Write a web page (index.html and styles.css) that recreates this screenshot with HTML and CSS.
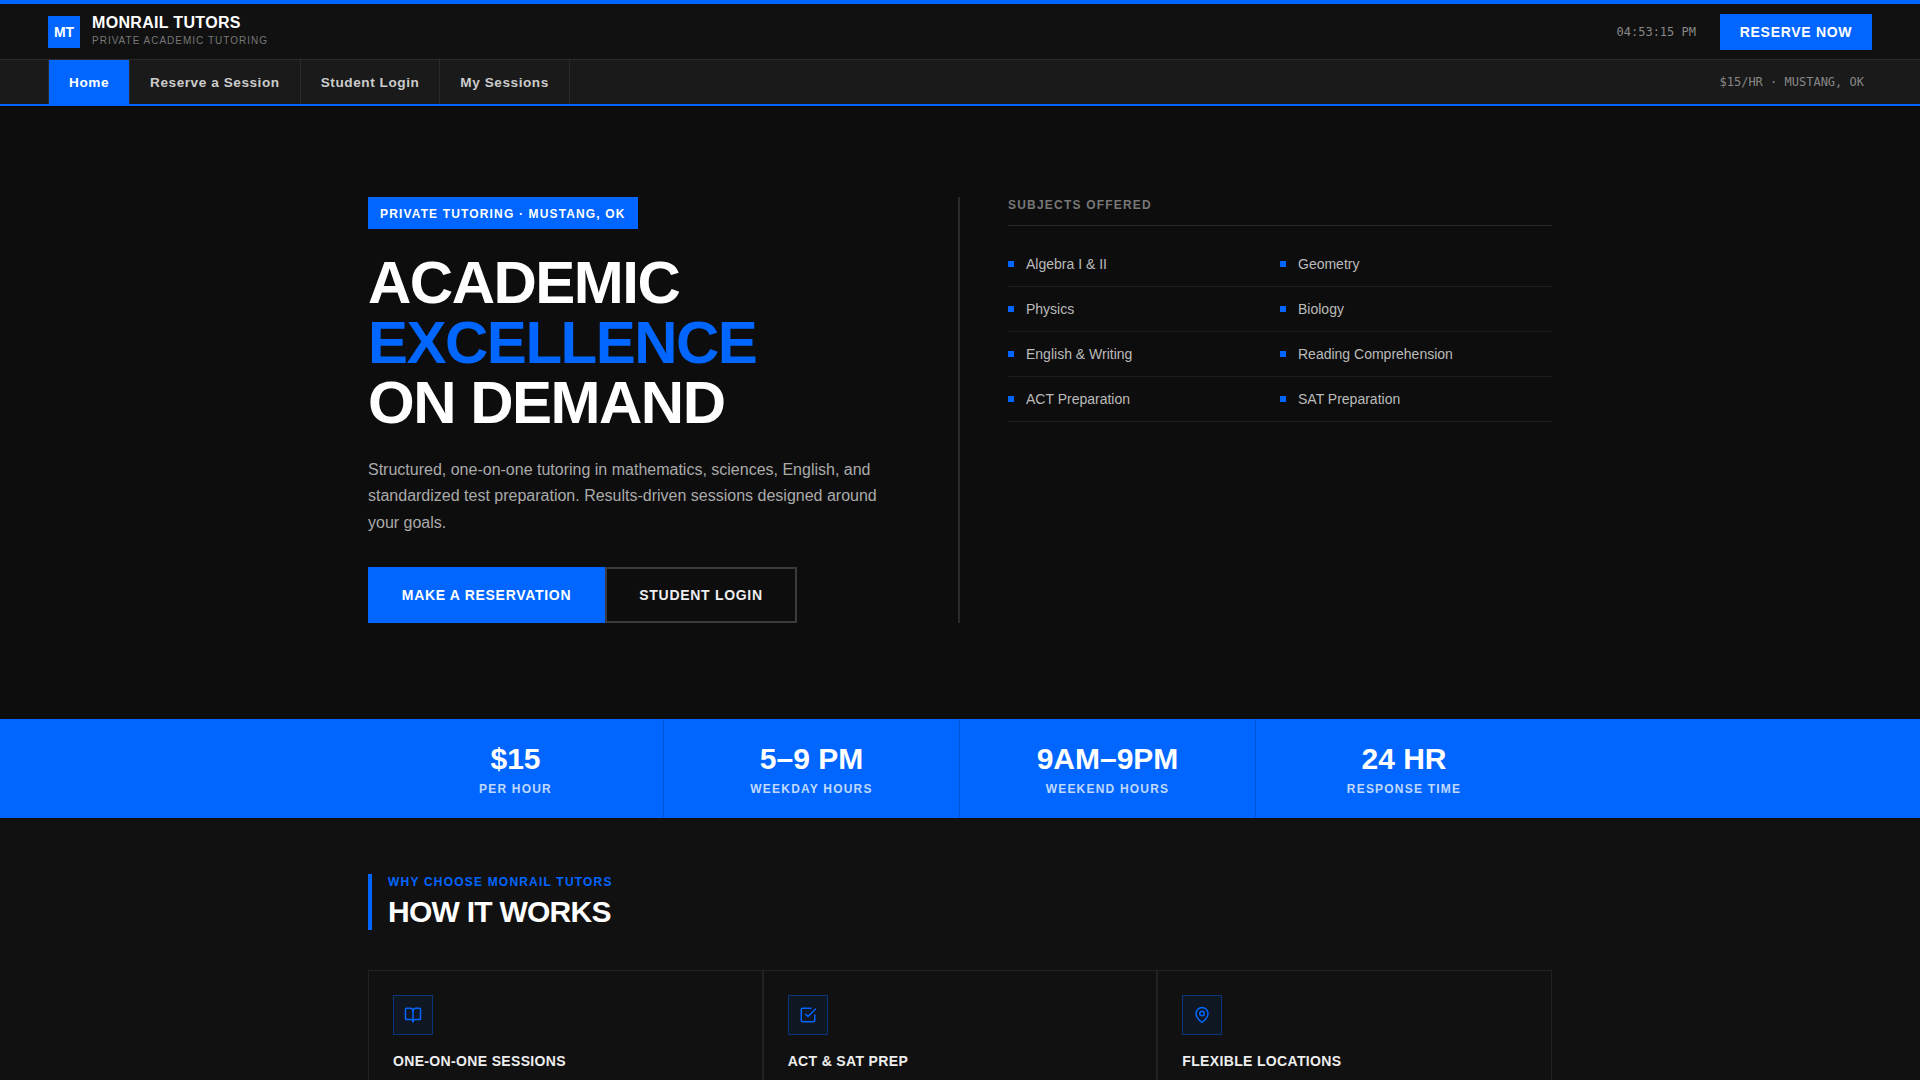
FILE: index.html
```html
<!DOCTYPE html>
<html lang="en">
<head>
<meta charset="utf-8">
<title>Monrail Tutors</title>
<link rel="stylesheet" href="styles.css">
</head>
<body>
<header class="topbar">
  <div class="brand">
    <div class="logo">MT</div>
    <div class="brand-text">
      <div class="brand-name">MONRAIL TUTORS</div>
      <div class="brand-sub">PRIVATE ACADEMIC TUTORING</div>
    </div>
  </div>
  <div class="top-right">
    <span class="clock">04:53:15 PM</span>
    <a class="reserve">RESERVE NOW</a>
  </div>
</header>
<nav class="nav">
  <ul class="nav-list">
    <li class="nav-item active">Home</li>
    <li class="nav-item">Reserve a Session</li>
    <li class="nav-item">Student Login</li>
    <li class="nav-item">My Sessions</li>
  </ul>
  <span class="nav-info">$15/HR · MUSTANG, OK</span>
</nav>
<main>
  <section class="hero">
    <div class="hero-inner">
      <div class="hero-left">
        <div class="tag">PRIVATE TUTORING · MUSTANG, OK</div>
        <h1 class="headline">ACADEMIC<br><span class="accent">EXCELLENCE</span><br>ON DEMAND</h1>
        <p class="lead">Structured, one-on-one tutoring in mathematics, sciences, English, and standardized test preparation. Results-driven sessions designed around your goals.</p>
        <div class="cta">
          <a class="btn btn-primary">MAKE A RESERVATION</a>
          <a class="btn btn-outline">STUDENT LOGIN</a>
        </div>
      </div>
      <div class="hero-right">
        <div class="subjects-title">SUBJECTS OFFERED</div>
        <ul class="subjects">
          <li>Algebra I &amp; II</li>
          <li>Geometry</li>
          <li>Physics</li>
          <li>Biology</li>
          <li>English &amp; Writing</li>
          <li>Reading Comprehension</li>
          <li>ACT Preparation</li>
          <li>SAT Preparation</li>
        </ul>
      </div>
    </div>
  </section>
  <section class="stats">
    <div class="stats-inner">
      <div class="stat"><div class="stat-num">$15</div><div class="stat-label">PER HOUR</div></div>
      <div class="stat"><div class="stat-num">5–9 PM</div><div class="stat-label">WEEKDAY HOURS</div></div>
      <div class="stat"><div class="stat-num">9AM–9PM</div><div class="stat-label">WEEKEND HOURS</div></div>
      <div class="stat"><div class="stat-num">24 HR</div><div class="stat-label">RESPONSE TIME</div></div>
    </div>
  </section>
  <section class="how">
    <div class="how-inner">
      <div class="section-head">
        <div class="eyebrow">WHY CHOOSE MONRAIL TUTORS</div>
        <h2 class="section-title">HOW IT WORKS</h2>
      </div>
      <div class="cards">
        <article class="card">
          <div class="icon-box">
            <svg class="icon" viewBox="0 0 24 24"><path d="M12 7v14"/><path d="M3 18a1 1 0 0 1-1-1V4a1 1 0 0 1 1-1h5a4 4 0 0 1 4 4 4 4 0 0 1 4-4h5a1 1 0 0 1 1 1v13a1 1 0 0 1-1 1h-6a3 3 0 0 0-3 3 3 3 0 0 0-3-3z"/></svg>
          </div>
          <h3 class="card-title">ONE-ON-ONE SESSIONS</h3>
        </article>
        <article class="card">
          <div class="icon-box">
            <svg class="icon" viewBox="0 0 24 24"><path d="m9 11 3 3L22 4"/><path d="M21 12v7a2 2 0 0 1-2 2H5a2 2 0 0 1-2-2V5a2 2 0 0 1 2-2h11"/></svg>
          </div>
          <h3 class="card-title">ACT &amp; SAT PREP</h3>
        </article>
        <article class="card">
          <div class="icon-box">
            <svg class="icon" viewBox="0 0 24 24"><path d="M20 10c0 6-8 12-8 12s-8-6-8-12a8 8 0 0 1 16 0Z"/><circle cx="12" cy="10" r="3"/></svg>
          </div>
          <h3 class="card-title">FLEXIBLE LOCATIONS</h3>
        </article>
      </div>
    </div>
  </section>
</main>
</body>
</html>
```
FILE: styles.css
```css
* { box-sizing: border-box; }
html, body { margin: 0; padding: 0; }
body {
  background: #111;
  color: #fff;
  font-family: "Liberation Sans", Arial, sans-serif;
}
a { display: block; }
ul { list-style: none; margin: 0; padding: 0; }

.topbar {
  display: flex;
  justify-content: space-between;
  align-items: center;
  height: 60px;
  padding: 10px 48px 9px;
  background: #111;
  border-top: 4px solid #0066ff;
  border-bottom: 1px solid #2a2a2a;
}
.brand { display: flex; align-items: center; gap: 12px; }
.logo {
  width: 32px;
  height: 32px;
  display: flex;
  align-items: center;
  justify-content: center;
  background: #0066ff;
  font-size: 14px;
  font-weight: 700;
}
.brand-text { padding-bottom: 2px; }
.brand-name { font-size: 16px; font-weight: 700; letter-spacing: 0.32px; line-height: 16px; }
.brand-sub { font-size: 10px; letter-spacing: 1px; color: #777; line-height: 12px; margin-top: 4.5px; }
.top-right { display: flex; align-items: center; gap: 24px; }
.clock { font-family: "DejaVu Sans Mono", monospace; font-size: 12px; color: #888; }
.reserve {
  width: 152px;
  height: 36px;
  line-height: 36px;
  text-align: center;
  background: #0066ff;
  font-size: 14px;
  font-weight: 700;
  letter-spacing: 0.7px;
}

.nav {
  display: flex;
  justify-content: space-between;
  align-items: center;
  height: 46px;
  padding: 0 56px 0 48px;
  background: #1a1a1a;
  border-bottom: 2px solid #0066ff;
}
.nav-list { display: flex; height: 44px; border-left: 1px solid #2a2a2a; }
.nav-item {
  display: flex;
  align-items: center;
  padding: 0 20px;
  font-size: 13.6px;
  font-weight: 700;
  letter-spacing: 0.56px;
  color: #ccc;
  border-right: 1px solid #2a2a2a;
}
.nav-item.active { background: #0066ff; color: #fff; }
.nav-info { font-family: "DejaVu Sans Mono", monospace; font-size: 12px; color: #888; }

.hero { background: #0d0d0d; padding: 91px 0 96px; }
.hero-inner {
  display: grid;
  grid-template-columns: 1fr 1fr;
  width: 1184px;
  margin: 0 auto;
}
.hero-left { padding-right: 48px; border-right: 2px solid #2a2a2a; }
.hero-right { padding-left: 48px; }
.tag {
  display: inline-block;
  height: 32px;
  line-height: 34px;
  padding: 0 12px;
  background: #0066ff;
  font-size: 12px;
  font-weight: 700;
  letter-spacing: 1.15px;
  vertical-align: top;
}
.headline {
  margin: 24px 0;
  font-size: 60px;
  line-height: 60px;
  font-weight: 700;
  letter-spacing: -1.5px;
}
.accent { color: #0066ff; }
.lead {
  margin: 0 0 30.8px;
  font-size: 16px;
  line-height: 26.4px;
  color: #aaa;
}
.cta { display: flex; }
.btn {
  height: 56px;
  line-height: 56px;
  font-size: 14px;
  font-weight: 700;
  letter-spacing: 0.7px;
  text-align: center;
}
.btn-primary { width: 237px; background: #0066ff; }
.btn-outline { width: 192px; line-height: 52px; border: 2px solid #3a3a3a; color: #eee; }

.subjects-title {
  font-size: 12px;
  font-weight: 700;
  letter-spacing: 1.2px;
  color: #777;
  line-height: 16px;
  padding-bottom: 12px;
  border-bottom: 1px solid #2a2a2a;
  margin-bottom: 16px;
}
.subjects { display: grid; grid-template-columns: 1fr 1fr; }
.subjects li {
  display: flex;
  align-items: center;
  gap: 12px;
  height: 45px;
  font-size: 14px;
  color: #bbb;
  border-bottom: 1px solid #1e1e1e;
}
.subjects li::before {
  content: "";
  width: 6px;
  height: 6px;
  background: #0066ff;
}

.stats { background: #0066ff; }
.stats-inner {
  display: grid;
  grid-template-columns: repeat(4, 1fr);
  width: 1184px;
  height: 99px;
  margin: 0 auto;
}
.stat {
  display: flex;
  flex-direction: column;
  align-items: center;
  justify-content: center;
  border-right: 1px solid rgba(0, 0, 0, 0.15);
}
.stat:last-child { border-right: 0; }
.stat-num { font-size: 30px; font-weight: 700; line-height: 36px; }
.stat-label { font-size: 12px; font-weight: 700; letter-spacing: 1.2px; color: rgba(255,255,255,0.75); line-height: 14px; margin-top: 5px; }

.how { background: #111; padding: 56px 0 80px; }
.how-inner { width: 1184px; margin: 0 auto; }
.section-head { border-left: 4px solid #0066ff; padding-left: 16px; height: 56px; margin-bottom: 40px; }
.eyebrow { font-size: 12px; font-weight: 700; letter-spacing: 1.2px; color: #0066ff; line-height: 16px; }
.section-title { margin: 4px 0 0; font-size: 30px; line-height: 36px; font-weight: 700; letter-spacing: -0.75px; }
.cards { display: grid; grid-template-columns: repeat(3, 1fr); }
.card { padding: 24px; border: 1px solid #222; min-height: 200px; }
.icon-box {
  display: flex;
  align-items: center;
  justify-content: center;
  width: 40px;
  height: 40px;
  background: rgba(0, 102, 255, 0.08);
  border: 1px solid rgba(0, 102, 255, 0.4);
}
.icon {
  width: 18px;
  height: 18px;
  fill: none;
  stroke: #0066ff;
  stroke-width: 2;
  stroke-linecap: round;
  stroke-linejoin: round;
}
.card-title { margin: 16px 0 0; font-size: 14px; line-height: 20px; font-weight: 700; letter-spacing: 0.34px; color: #eee; }
```
